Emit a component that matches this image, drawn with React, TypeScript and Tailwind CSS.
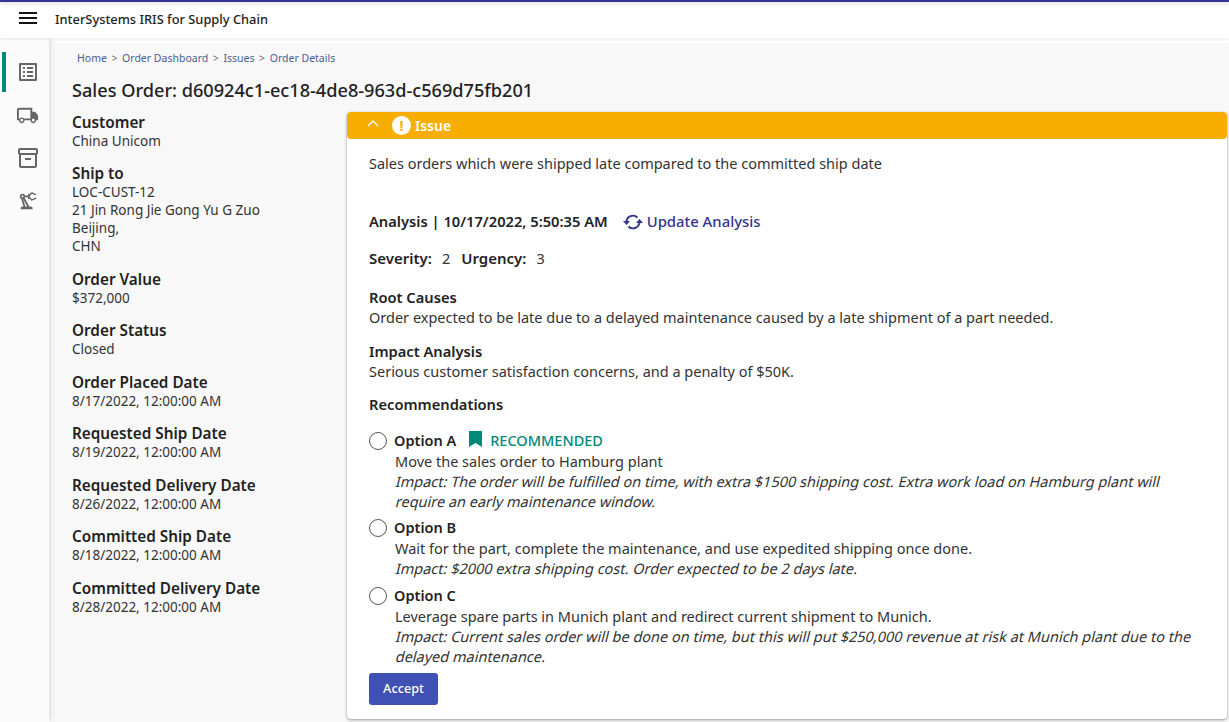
import React from "react";
import { MdOutlineListAlt, MdOutlineInventory2, MdOutlinePrecisionManufacturing } from "react-icons/md";

const Field = ({ label, lines }: { label: string; lines: string[] }) => (
  <div className="mb-[12.5px]">
    <div className="pt-[1px] text-[15.3px] leading-[20px] font-semibold text-[#1f1f1f]">{label}</div>
    {lines.map((l) => (
      <div key={l} className="text-[13.5px] leading-[18px] text-[#333]">{l}</div>
    ))}
  </div>
);

const Option = ({ name, rec, desc, impact, className }: { name: string; rec?: boolean; desc: string; impact: string[]; className?: string }) => (
  <div className={className ?? "mb-[4px]"}>
    <div className="flex items-center h-[23px] pt-[2px]">
      <span className="w-[18px] h-[18px] rounded-full border border-[#555] bg-white mr-[7px]" />
      <span className="text-[14.5px] font-semibold text-[#222]">{name}</span>
      {rec && (
        <span className="flex items-center ml-[13px] text-[14.5px] font-medium text-[#00897b]">
          <svg width="13" height="17" viewBox="0 0 13 17" className="mr-[8px] -mt-[3px]"><path d="M0 0h13v16l-6.500-4L0 16z" fill="#00897b" /></svg>
          RECOMMENDED
        </span>
      )}
    </div>
    <div className="pl-[26px] text-[14.5px] leading-[20px] text-[#333]">
      <div>{desc}</div>
      {impact.map((l) => (
        <div key={l} className="-skew-x-[14deg] origin-[0_15px] whitespace-nowrap">{l}</div>
      ))}
    </div>
  </div>
);

const Crumb = ({ children }: { children: React.ReactNode }) => <span className="text-[#4a5f94]">{children}</span>;
const Sep = () => <span className="mx-[4.6px] text-[#666]">&gt;</span>;

export default function App() {
  return (
    <div className="h-[722px] w-[1229px] overflow-hidden bg-white flex flex-col font-['Noto_Sans',sans-serif]">
      <div className="h-[2px] shrink-0 bg-[#333391] shadow-[0_1px_4px_rgba(0,0,0,0.25)] relative z-20" />
      <header className="h-[36px] shrink-0 bg-white flex items-center shadow-[0_1px_3px_rgba(0,0,0,0.1)] relative z-10">
        <svg width="18" height="12" viewBox="0 0 18 12" className="ml-[19px] -mt-[4px]"><path d="M0 1h18M0 6h18M0 11h18" stroke="#111" strokeWidth="2" /></svg>
        <span className="ml-[18px] text-[12.85px] font-medium text-[#1c1c1c]">InterSystems IRIS for Supply Chain</span>
      </header>
      <div className="flex flex-1 min-h-0">
        <aside className="w-[49px] shrink-0 bg-[#fbfbfb] shadow-[1px_0_6px_rgba(0,0,0,0.2)] flex flex-col items-center pt-[12.5px] relative z-[5] text-[#666]">
          <div className="h-[43px] w-full flex items-center justify-center relative">
            <span className="absolute left-[2px] top-[1.5px] w-[4px] h-[40px] bg-[#00897b]" />
            <MdOutlineListAlt size={24} className="ml-[6px]" />
          </div>
          <div className="h-[43px] flex items-center justify-center ml-[5px]">
            <svg width="23" height="23" viewBox="0 0 24 24" fill="#666"><path fillRule="evenodd" d="M20 8h-3V4H3c-1.100 0-2 .9-2 2v11h2c0 1.660 1.340 3 3 3s3-1.340 3-3h6c0 1.660 1.340 3 3 3s3-1.340 3-3h2v-5l-3-4zM15 6H3v9h.78c.55-.61 1.330-1 2.220-1s1.670.39 2.220 1H15zM6 18.500a1.500 1.500 0 110-3 1.500 1.500 0 010 3zM18 18.500a1.500 1.500 0 110-3 1.500 1.500 0 010 3z" /></svg>
          </div>
          <div className="h-[43px] flex items-center justify-center ml-[6px]">
            <MdOutlineInventory2 size={24} />
          </div>
          <div className="h-[43px] flex items-center justify-center ml-[6px]">
            <MdOutlinePrecisionManufacturing size={22} />
          </div>
        </aside>
        <main className="ml-[4px] mt-[5px] flex-1 min-w-0 bg-[#f8f8f8]">
          <div className="pl-[24px] pt-[7px] text-[10.5px] leading-[16px]">
            <Crumb>Home</Crumb><Sep /><Crumb>Order Dashboard</Crumb><Sep /><Crumb>Issues</Crumb><Sep /><Crumb>Order Details</Crumb>
          </div>
          <h1 className="pl-[19px] mt-[12px] text-[18.15px] leading-[24px] font-medium text-[#222]">Sales Order: d60924c1-ec18-4de8-963d-c569d75fb201</h1>
          <div className="flex mt-[10px]">
            <div className="w-[294px] shrink-0 pl-[19px] -mt-[1.25px]">
              <Field label="Customer" lines={["China Unicom"]} />
              <Field label="Ship to" lines={["LOC-CUST-12", "21 Jin Rong Jie Gong Yu G Zuo", "Beijing,", "CHN"]} />
              <Field label="Order Value" lines={["$372,000"]} />
              <Field label="Order Status" lines={["Closed"]} />
              <Field label="Order Placed Date" lines={["8/17/2022, 12:00:00 AM"]} />
              <Field label="Requested Ship Date" lines={["8/19/2022, 12:00:00 AM"]} />
              <Field label="Requested Delivery Date" lines={["8/26/2022, 12:00:00 AM"]} />
              <Field label="Committed Ship Date" lines={["8/18/2022, 12:00:00 AM"]} />
              <Field label="Committed Delivery Date" lines={["8/28/2022, 12:00:00 AM"]} />
            </div>
            <section className="w-[880px] h-[607px] bg-white rounded-[4px] shadow-[0_1px_3px_rgba(0,0,0,0.4)] flex flex-col">
              <div className="h-[27px] bg-[#f7ae00] rounded-[4px] flex items-center text-white shrink-0">
                <svg width="12" height="8" viewBox="0 0 12 8" fill="none" className="ml-[20px] -mt-[4px]"><path d="M1 6l5-5 5 5" stroke="#fff" strokeWidth="1.3" /></svg>
                <span className="ml-[13px] w-[19px] h-[19px] rounded-full bg-white text-[#f7ae00] text-[14px] font-bold flex items-center justify-center">!</span>
                <span className="ml-[4px] text-[14px] font-semibold">Issue</span>
              </div>
              <div className="pl-[22px] pr-[20px] text-[14.5px] text-[#333]">
                <p className="mt-[14px] leading-[20px]">Sales orders which were shipped late compared to the committed ship date</p>
                <div className="flex items-center mt-[38px] h-[20px]">
                  <span className="font-semibold text-[14.7px] text-[#222]">Analysis | 10/17/2022, 5:50:35 AM</span>
                  <svg width="20" height="18" viewBox="0 0 20 18" fill="none" className="ml-[15px] mt-[1px]"><path d="M3.500 9a6.500 6.500 0 0111-4.500M16.500 9a6.500 6.500 0 01-11 4.500" stroke="#333391" strokeWidth="1.9" /><path d="M0 8h7l-3.500 4zM13 10h7l-3.500-4z" fill="#333391" /></svg>
                  <span className="ml-[4px] text-[14.85px] font-medium text-[#333391]">Update Analysis</span>
                </div>
                <div className="flex mt-[17px] h-[20px] leading-[20px]">
                  <span className="font-semibold text-[15px] text-[#222]">Severity:</span><span className="ml-[10px] mr-[11px]">2</span>
                  <span className="font-semibold text-[15px] text-[#222]">Urgency:</span><span className="ml-[10px]">3</span>
                </div>
                <div className="mt-[19px] leading-[20px]"><div className="font-semibold text-[14.7px] text-[#222]">Root Causes</div><div>Order expected to be late due to a delayed maintenance caused by a late shipment of a part needed.</div></div>
                <div className="mt-[14px] leading-[20px]"><div className="font-semibold text-[14.7px] text-[#222]">Impact Analysis</div><div>Serious customer satisfaction concerns, and a penalty of $50K.</div></div>
                <div className="mt-[13px] leading-[20px] font-semibold text-[14.7px] text-[#222]">Recommendations</div>
                <div className="mt-[14px]">
                  <Option name="Option A" rec desc="Move the sales order to Hamburg plant" impact={["Impact: The order will be fulfilled on time, with extra $1500 shipping cost. Extra work load on Hamburg plant will", "require an early maintenance window."]} />
                  <Option name="Option B" desc="Wait for the part, complete the maintenance, and use expedited shipping once done." impact={["Impact: $2000 extra shipping cost. Order expected to be 2 days late."]} />
                  <Option name="Option C" className="mt-[5px] -mb-[1px]" desc="Leverage spare parts in Munich plant and redirect current shipment to Munich." impact={["Impact: Current sales order will be done on time, but this will put $250,000 revenue at risk at Munich plant due to the", "delayed maintenance."]} />
                </div>
                <button className="mt-[8px] w-[69px] h-[32px] rounded-[3px] bg-[#3f51b5] text-white text-[12.7px] font-medium">Accept</button>
              </div>
            </section>
          </div>
        </main>
      </div>
    </div>
  );
}
